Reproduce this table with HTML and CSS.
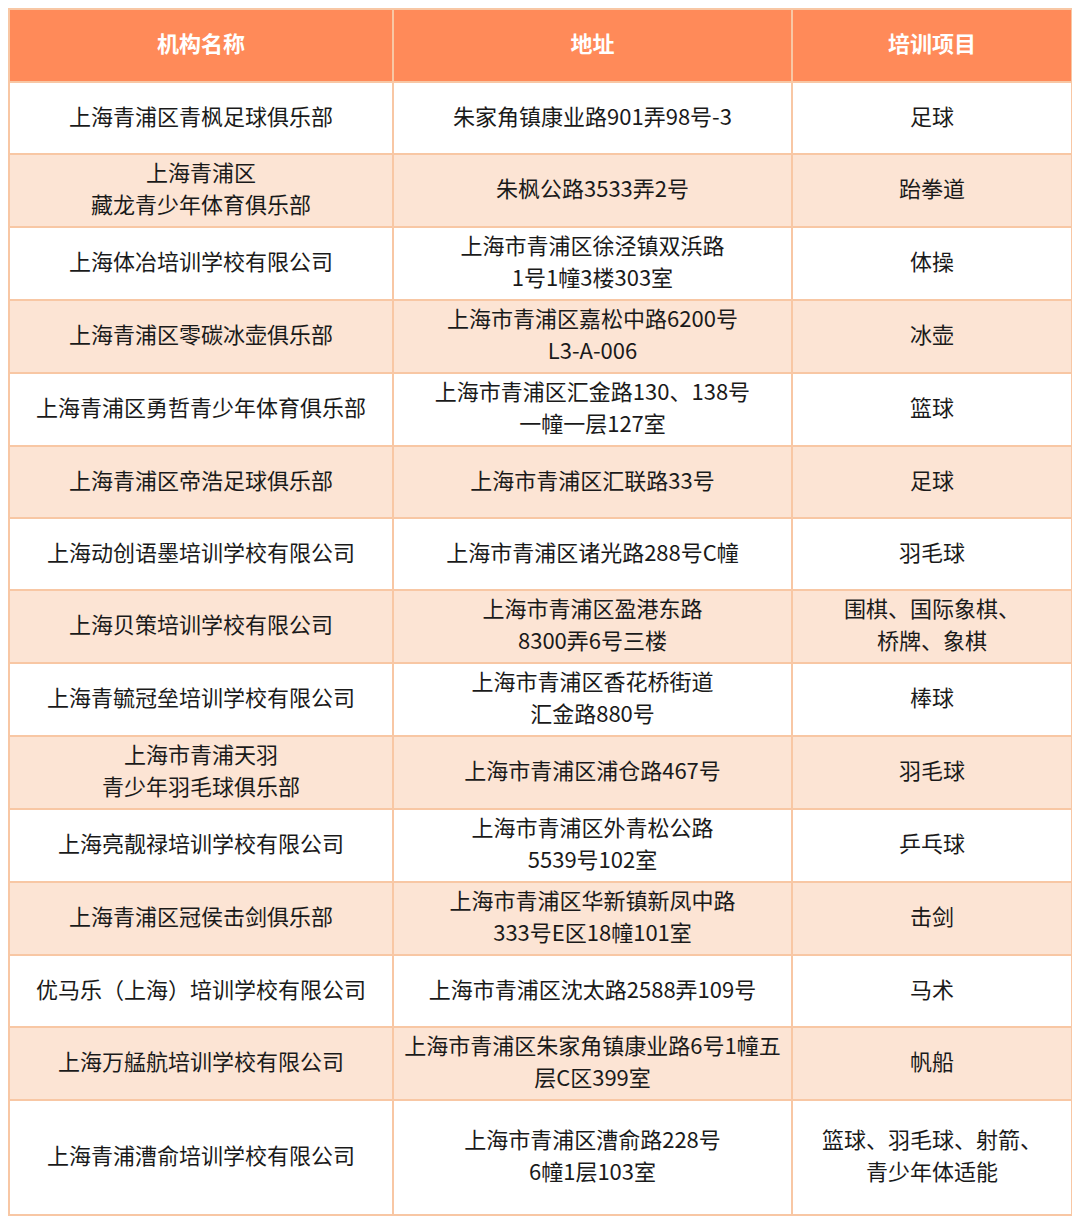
FILE: index.html
```html
<!DOCTYPE html>
<html lang="zh-CN">
<head>
<meta charset="utf-8">
<link rel="stylesheet" href="styles.css">
</head>
<body>
<table class="list">
  <colgroup><col class="c1"><col class="c2"><col class="c3"></colgroup>
  <thead>
    <tr><th>机构名称</th><th>地址</th><th>培训项目</th></tr>
  </thead>
  <tbody>
    <tr><td>上海青浦区青枫足球俱乐部</td><td>朱家角镇康业路901弄98号-3</td><td>足球</td></tr>
    <tr class="alt"><td>上海青浦区<br>藏龙青少年体育俱乐部</td><td>朱枫公路3533弄2号</td><td>跆拳道</td></tr>
    <tr><td>上海体冶培训学校有限公司</td><td>上海市青浦区徐泾镇双浜路<br>1号1幢3楼303室</td><td>体操</td></tr>
    <tr class="alt"><td>上海青浦区零碳冰壶俱乐部</td><td>上海市青浦区嘉松中路6200号<br>L3-A-006</td><td>冰壶</td></tr>
    <tr><td>上海青浦区勇哲青少年体育俱乐部</td><td>上海市青浦区汇金路130、138号<br>一幢一层127室</td><td>篮球</td></tr>
    <tr class="alt"><td>上海青浦区帝浩足球俱乐部</td><td>上海市青浦区汇联路33号</td><td>足球</td></tr>
    <tr><td>上海动创语墨培训学校有限公司</td><td>上海市青浦区诸光路288号C幢</td><td>羽毛球</td></tr>
    <tr class="alt"><td>上海贝策培训学校有限公司</td><td>上海市青浦区盈港东路<br>8300弄6号三楼</td><td>围棋、国际象棋、<br>桥牌、象棋</td></tr>
    <tr><td>上海青毓冠垒培训学校有限公司</td><td>上海市青浦区香花桥街道<br>汇金路880号</td><td>棒球</td></tr>
    <tr class="alt"><td>上海市青浦天羽<br>青少年羽毛球俱乐部</td><td>上海市青浦区浦仓路467号</td><td>羽毛球</td></tr>
    <tr><td>上海亮靓禄培训学校有限公司</td><td>上海市青浦区外青松公路<br>5539号102室</td><td>乒乓球</td></tr>
    <tr class="alt"><td>上海青浦区冠侯击剑俱乐部</td><td>上海市青浦区华新镇新凤中路<br>333号E区18幢101室</td><td>击剑</td></tr>
    <tr><td>优马乐（上海）培训学校有限公司</td><td>上海市青浦区沈太路2588弄109号</td><td>马术</td></tr>
    <tr class="alt"><td>上海万艋航培训学校有限公司</td><td>上海市青浦区朱家角镇康业路6号1幢五<br>层C区399室</td><td>帆船</td></tr>
    <tr class="last"><td>上海青浦漕俞培训学校有限公司</td><td>上海市青浦区漕俞路228号<br>6幢1层103室</td><td>篮球、羽毛球、射箭、<br>青少年体适能</td></tr>
  </tbody>
</table>
</body>
</html>
```

FILE: styles.css
```css
html, body {
  background: #ffffff;
}
body {
  margin: 8px;
  font-family: "Noto Sans CJK SC", "Noto Sans", sans-serif;
  color: #1a1a1a;
}
.list {
  width: 1063px;
  border-collapse: collapse;
  table-layout: fixed;
}
.c1 { width: 384px; }
.c2 { width: 399px; }
.c3 { width: 280px; }
.list th,
.list td {
  border: 2px solid #f8c7a4;
  text-align: center;
  vertical-align: middle;
  font-size: 22px;
  line-height: 32px;
  padding: 0 8px 7px;
}
.list th {
  background: #ff8a59;
  color: #ffffff;
  font-weight: bold;
  height: 73px;
  box-sizing: border-box;
}
.list td {
  height: 72px;
  box-sizing: border-box;
}
.list td + td,
.list th + th {
  border-left-color: #f6b688;
}
.list tr.alt td {
  background: #fce4d4;
}
.list tr.last td {
  height: 115px;
}
```
